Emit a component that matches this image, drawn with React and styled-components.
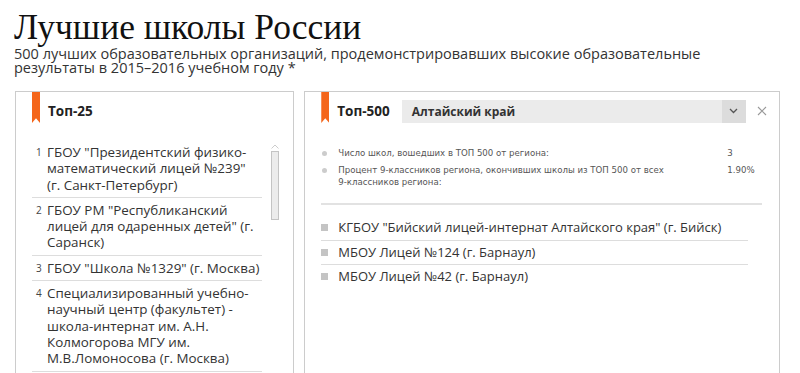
import { createGlobalStyle, styled } from "styled-components";

const Global = createGlobalStyle`
  html, body { margin: 0; padding: 0; background: #fff; }
  body { font-family: "Open Sans", "Noto Sans", sans-serif; color: #333; overflow: hidden; }
`;

const top25 = [
  { n: 1, name: 'ГБОУ "Президентский физико-математический лицей №239" (г. Санкт-Петербург)' },
  { n: 2, name: 'ГБОУ РМ "Республиканский лицей для одаренных детей" (г. Саранск)' },
  { n: 3, name: 'ГБОУ "Школа №1329" (г. Москва)' },
  { n: 4, name: "Специализированный учебно-научный центр (факультет) - школа-интернат им. А.Н. Колмогорова МГУ им. М.В.Ломоносова (г. Москва)" },
];

const stats = [
  { label: "Число школ, вошедших в ТОП 500 от региона:", value: "3" },
  { label: "Процент 9-классников региона, окончивших школы из ТОП 500 от всех 9-классников региона:", value: "1.90%" },
];

const regionSchools = [
  'КГБОУ "Бийский лицей-интернат Алтайского края" (г. Бийск)',
  "МБОУ Лицей №124 (г. Барнаул)",
  "МБОУ Лицей №42 (г. Барнаул)",
];

const Page = styled.div`
  width: 800px;
  height: 373px;
  overflow: hidden;
`;

const Header = styled.header`
  padding: 7px 0 0 14px;
`;

const Title = styled.h1`
  margin: 0;
  font-family: "Liberation Serif", "DejaVu Serif", serif;
  font-weight: normal;
  font-size: 35.5px;
  line-height: 40px;
  color: #111;
`;

const Subtitle = styled.p`
  margin: 0;
  font-size: 14.5px;
  line-height: 14px;
  color: #333;
  width: 740px;
`;

const Panels = styled.div`
  display: flex;
  gap: 10px;
  padding: 16px 20px 0 15px;
`;

const Panel = styled.section`
  border: 1px solid #ccc;
  border-bottom: none;
  height: 290px;
  width: ${(p) => p.$w}px;
  box-sizing: border-box;
  overflow: hidden;
`;

const PanelHead = styled.div`
  display: flex;
  align-items: center;
  height: 38px;
  padding-left: 16px;
`;

const Bookmark = styled.div`
  align-self: flex-start;
  width: 8px;
  height: 31px;
  background: #f4661b;
  clip-path: polygon(0 0, 100% 0, 100% 100%, 50% 85%, 0 100%);
  margin-right: 8px;
`;

const HeadTitle = styled.h2`
  margin: 0;
  font-size: 13.5px;
  font-weight: bold;
  color: #222;
  white-space: nowrap;
`;

const ListArea = styled.div`
  display: flex;
  padding: 14px 0 0 16px;
`;

const TopList = styled.ol`
  list-style: none;
  margin: 0;
  padding: 0;
  width: 230px;
`;

const TopItem = styled.li`
  display: flex;
  font-size: 13.4px;
  line-height: 16.3px;
  padding: 0 0 4px 0;
  border-bottom: 1px solid #ddd;
  margin-bottom: 4px;
`;

const Num = styled.span`
  width: 15px;
  flex: none;
  font-size: 10px;
  padding-left: 4px;
  box-sizing: border-box;
  color: #444;
`;

const Scroll = styled.div`
  margin-left: 9px;
  display: flex;
  flex-direction: column;
  align-items: center;
  width: 8px;
`;

const ScrollThumb = styled.div`
  width: 6px;
  height: 67px;
  border: 1px solid #c4c4c4;
  background: #ececec;
  margin-top: 2px;
`;

const RegionSelect = styled.div`
  display: flex;
  align-items: center;
  margin-left: 12px;
  width: 344px;
  height: 23px;
  background: #ebebeb;
`;

const SelectText = styled.span`
  flex: 1;
  font-size: 12px;
  font-weight: bold;
  color: #333;
  padding-left: 10px;
`;

const SelectBtn = styled.span`
  display: flex;
  align-items: center;
  justify-content: center;
  width: 24px;
  height: 23px;
  background: #dcdcdc;
`;

const Close = styled.span`
  margin-left: 11px;
  display: flex;
  align-items: center;
`;

const Stats = styled.div`
  margin: 17px 17px 0 16px;
  padding-bottom: 10px;
  border-bottom: 2px solid #e2e2e2;
`;

const StatRow = styled.div`
  display: flex;
  font-family: "DejaVu Sans", "Noto Sans", sans-serif;
  font-size: 8.6px;
  line-height: 12px;
  color: #555;
  margin-bottom: 5px;
`;

const Dot = styled.span`
  flex: none;
  width: 5px;
  height: 5px;
  border-radius: 50%;
  background: #ccc;
  margin: 3.5px 11px 0 1px;
`;

const StatLabel = styled.span`
  width: 334px;
`;

const StatValue = styled.span`
  margin-left: 55px;
`;

const SchoolList = styled.ul`
  list-style: none;
  margin: 11px 31px 0 16px;
  padding: 0;
`;

const School = styled.li`
  display: flex;
  align-items: center;
  font-size: 13px;
  line-height: 17.5px;
  padding: 3px 0 3px;
  border-bottom: ${(p) => (p.$last ? "none" : "1px solid #ddd")};
`;

const Square = styled.span`
  flex: none;
  width: 7px;
  height: 7px;
  background: #c4c4c4;
  margin: 0 10px 0 0;
`;

export default function App() {
  return (
    <Page>
      <Global />
      <Header>
        <Title>Лучшие школы России</Title>
        <Subtitle>
          500 лучших образовательных организаций, продемонстрировавших высокие образовательные
          результаты в 2015–2016 учебном году *
        </Subtitle>
      </Header>
      <Panels>
        <Panel $w={280}>
          <PanelHead>
            <Bookmark />
            <HeadTitle>Топ-25</HeadTitle>
          </PanelHead>
          <ListArea>
            <TopList>
              {top25.map((s) => (
                <TopItem key={s.n}>
                  <Num>{s.n}</Num>
                  <span>{s.name}</span>
                </TopItem>
              ))}
            </TopList>
            <Scroll>
              <svg width="8" height="5" viewBox="0 0 8 5">
                <path d="M0.5 4.5 L4 1 L7.5 4.5" fill="none" stroke="#ccc" strokeWidth="1" />
              </svg>
              <ScrollThumb />
            </Scroll>
          </ListArea>
        </Panel>
        <Panel $w={477}>
          <PanelHead>
            <Bookmark />
            <HeadTitle>Топ-500</HeadTitle>
            <RegionSelect>
              <SelectText>Алтайский край</SelectText>
              <SelectBtn>
                <svg width="9" height="6" viewBox="0 0 9 6">
                  <path d="M1 1 L4.5 4.5 L8 1" fill="none" stroke="#555" strokeWidth="1.3" />
                </svg>
              </SelectBtn>
            </RegionSelect>
            <Close>
              <svg width="10" height="10" viewBox="0 0 10 10">
                <path d="M1 1 L9 9 M9 1 L1 9" stroke="#999" strokeWidth="1.1" />
              </svg>
            </Close>
          </PanelHead>
          <Stats>
            {stats.map((s) => (
              <StatRow key={s.label}>
                <Dot />
                <StatLabel>{s.label}</StatLabel>
                <StatValue>{s.value}</StatValue>
              </StatRow>
            ))}
          </Stats>
          <SchoolList>
            {regionSchools.map((s, i) => (
              <School key={s} $last={i === regionSchools.length - 1}>
                <Square />
                {s}
              </School>
            ))}
          </SchoolList>
        </Panel>
      </Panels>
    </Page>
  );
}
